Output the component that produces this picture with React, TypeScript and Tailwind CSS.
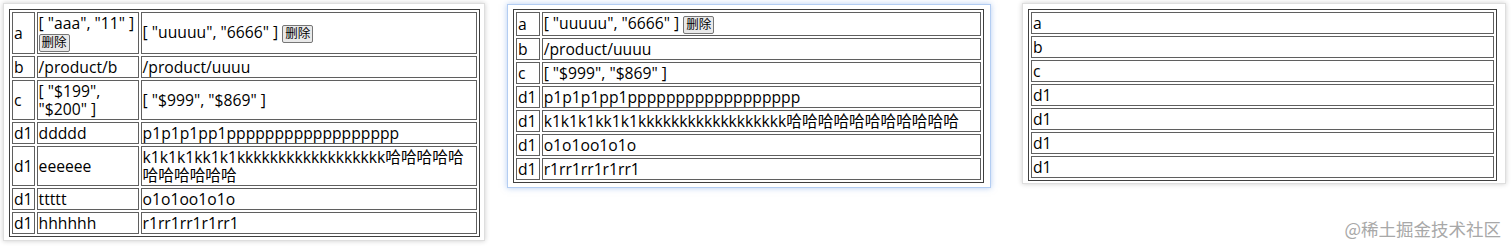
import React from 'react';

type Cell = React.ReactNode;

const FONT = "font-['Open_Sans','Noto_Sans_CJK_SC',sans-serif]";

function DelButton() {
  return (
    <button className="inline-block rounded-[2px] border border-[#767676] bg-[#e9e9e9] px-[2px] align-middle text-[12.5px] leading-[16px] text-black">
      删除
    </button>
  );
}

const LEFT: Cell[][] = [
  ['a', <>[ "aaa", "11" ] <DelButton /></>, <>[ "uuuuu", "6666" ] <DelButton /></>],
  ['b', '/product/b', '/product/uuuu'],
  ['c', '[ "$199", "$200" ]', '[ "$999", "$869" ]'],
  ['d1', 'ddddd', 'p1p1p1pp1pppppppppppppppppp'],
  ['d1', 'eeeeee', 'k1k1k1kk1k1kkkkkkkkkkkkkkkkkk哈哈哈哈哈哈哈哈哈哈哈'],
  ['d1', 'ttttt', 'o1o1oo1o1o'],
  ['d1', 'hhhhhh', 'r1rr1rr1r1rr1'],
];

const MIDDLE: Cell[][] = [
  ['a', <>[ "uuuuu", "6666" ] <DelButton /></>],
  ['b', '/product/uuuu'],
  ['c', '[ "$999", "$869" ]'],
  ['d1', 'p1p1p1pp1pppppppppppppppppp'],
  ['d1', 'k1k1k1kk1k1kkkkkkkkkkkkkkkkkk哈哈哈哈哈哈哈哈哈哈哈'],
  ['d1', 'o1o1oo1o1o'],
  ['d1', 'r1rr1rr1r1rr1'],
];

const RIGHT: Cell[][] = [['a'], ['b'], ['c'], ['d1'], ['d1'], ['d1'], ['d1']];

function DataTable({ rows, width, colWidths }: { rows: Cell[][]; width: string; colWidths?: (string | undefined)[] }) {
  return (
    <table className={`${width} border-separate border-spacing-[2px] border border-[#3f3f3f]`}>
      <tbody>
        {rows.map((row, i) => (
          <tr key={i}>
            {row.map((cell, j) => (
              <td
                key={j}
                className={`${colWidths?.[j] ?? ''} border border-[#5f5f5f] p-px text-left align-middle leading-[18px]`}
              >
                {cell}
              </td>
            ))}
          </tr>
        ))}
      </tbody>
    </table>
  );
}

export default function App() {
  return (
    <div className={`relative h-[249px] w-[1512px] overflow-hidden bg-white text-[15.7px] text-black ${FONT}`}>
      <div className="flex items-start pl-[3px] pt-[3px]">
        {/* left card */}
        <div className="w-[482px] border border-[#dedede] bg-white px-[5px] pb-[3px] pt-[5px] shadow-[0_0_5px_rgba(0,0,0,0.2)]">
          <DataTable rows={LEFT} width="w-[471px]" colWidths={[undefined, 'w-[102px]', undefined]} />
        </div>

        {/* middle card */}
        <div className="ml-[22px] mt-px w-[484px] border border-[#b3cdf2] bg-white px-[5px] pb-[4px] pt-[4px] shadow-[0_0_6px_rgba(110,155,230,0.5)]">
          <DataTable rows={MIDDLE} width="w-[471px]" />
        </div>

        {/* right card */}
        <div className="ml-[31px] w-[484px] border border-[#dedede] bg-white pb-[2px] pl-[5px] pr-[7px] pt-[5px] shadow-[0_0_5px_rgba(0,0,0,0.2)]">
          <DataTable rows={RIGHT} width="w-[469px]" />
        </div>
      </div>

      <span className="absolute right-[11px] top-[218px] text-[17.5px] leading-[22px] text-[#a8a8a8] [text-shadow:0_0_1px_#fff] font-['Noto_Sans_CJK_SC',sans-serif]">
        @稀土掘金技术社区
      </span>
    </div>
  );
}
